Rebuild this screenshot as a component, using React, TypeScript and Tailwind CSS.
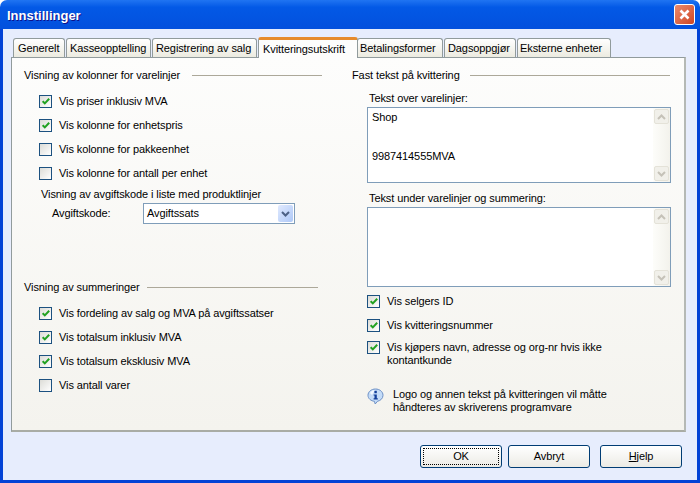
import React from "react";

const FONT = "[font-family:'Liberation_Sans',sans-serif]";

const TABS = [
  { label: "Generelt", box: "w-[52px] pl-[4px]" },
  { label: "Kasseopptelling", box: "w-[85px] pl-[3px]" },
  { label: "Registrering av salg", box: "w-[105px] pl-[3px]" },
  { label: "Kvitteringsutskrift", box: "w-[100px] pl-[4px]", active: true },
  { label: "Betalingsformer", box: "w-[86px] -ml-[2px] pl-[2px]" },
  { label: "Dagsoppgjør", box: "w-[72px] pl-[3px]" },
  { label: "Eksterne enheter", box: "w-[94px] pl-[2px]" },
];

function Check({ checked, label, className = "" }: { checked?: boolean; label: string; className?: string }) {
  return (
    <div className={`flex items-start gap-[7px] ${className}`}>
      <span className="w-[13px] h-[13px] shrink-0 border border-[#1c5180] bg-gradient-to-br from-[#dcdcd7] to-white flex items-center justify-center">
        {checked && (
          <svg width="8" height="7" viewBox="0 0 8 7">
            <path d="M0.7 3.2 L2.8 5.4 L7.2 0.8" fill="none" stroke="#21a121" strokeWidth="2" />
          </svg>
        )}
      </span>
      <span className="leading-[13px] text-black">{label}</span>
    </div>
  );
}

function GroupTitle({ title, line }: { title: string; line: string }) {
  return (
    <div className="flex items-center h-[13px]">
      <span className="whitespace-nowrap leading-[13px]">{title}</span>
      <span className={`h-px bg-[#aca899] ${line}`} />
    </div>
  );
}

function ScrollButton({ down }: { down?: boolean }) {
  return (
    <span className="w-[15px] h-[15px] rounded-[2px] bg-[#f1f0ea] border border-[#e4e2d8] flex items-center justify-center">
      <svg width="9" height="6" viewBox="0 0 9 6">
        <path d={down ? "M1 1 L4.5 4.5 L8 1" : "M1 5 L4.5 1.5 L8 5"} fill="none" stroke="#c5c2b8" strokeWidth="2" />
      </svg>
    </span>
  );
}

function TextBox({ height, children }: { height: string; children?: React.ReactNode }) {
  return (
    <div className={`flex w-[304px] ${height} border border-[#7f9db9] bg-white`}>
      <div className="flex-1 px-[4px] py-[3px] leading-[13px]">{children}</div>
      <div className="w-[17px] bg-gradient-to-r from-[#fdfdfa] to-[#f3f2ec] flex flex-col justify-between items-center py-px">
        <ScrollButton />
        <ScrollButton down />
      </div>
    </div>
  );
}

function WinButton({ label, focused }: { label: React.ReactNode; focused?: boolean }) {
  return (
    <button className="w-[82px] h-[23px] rounded-[3px] border border-[#003c74] bg-gradient-to-b from-white to-[#ecebe5] text-black flex items-center justify-center p-[2px]">
      <span className={`w-full h-full flex items-center justify-center ${focused ? "border border-dotted border-black" : ""}`}>{label}</span>
    </button>
  );
}

export default function App() {
  return (
    <div className={`w-[700px] h-[483px] bg-white overflow-hidden flex flex-col text-[11px] tracking-[-0.1px] text-black ${FONT}`}>
      {/* Title bar */}
      <div className="h-[29px] shrink-0 rounded-t-[7px] bg-gradient-to-b from-[#1f74f2] via-[#0359e6] via-[25%] to-[#0350dd] flex items-center justify-between pl-[7px] pr-[5px]">
        <span className="pt-[2px] text-white font-bold text-[13px] tracking-normal [text-shadow:1px_1px_#0f1089]">Innstillinger</span>
        <span className="w-[21px] h-[21px] rounded-[3px] border border-white bg-gradient-to-br from-[#ea8a6c] to-[#cf4420] flex items-center justify-center">
          <svg width="13" height="13" viewBox="0 0 13 13">
            <path d="M2.5 2.5 L10.5 10.5 M10.5 2.5 L2.5 10.5" stroke="white" strokeWidth="2.6" />
          </svg>
        </span>
      </div>

      {/* Window body */}
      <div className="flex-1 bg-[#e7edfd] border-x-[3px] border-b-[3px] border-[#0343d6] pl-[8px] pr-[11px] flex flex-col">
        {/* Tabs */}
        <div className="flex items-end h-[29px] pl-[2px] gap-px -mb-px">
          {TABS.map((tab) =>
            tab.active ? (
              <div key={tab.label} className={`${tab.box} h-[21px] relative z-10 bg-[#fdfdfc] border-x border-[#919b9c] border-t-[3px] border-t-[#e68b2c] rounded-t-[3px] flex items-center whitespace-nowrap`}>
                {tab.label}
              </div>
            ) : (
              <div key={tab.label} className={`${tab.box} h-[19px] mb-px bg-gradient-to-b from-white to-[#ecebe0] border border-b-0 border-[#919b9c] rounded-t-[3px] flex items-center whitespace-nowrap`}>
                {tab.label}
              </div>
            )
          )}
        </div>

        {/* Panel */}
        <div className="w-[675px] h-[375px] border border-[#919b9c] border-r-2 border-b-2 border-r-[#b5b9b5] border-b-[#a9aca5] bg-gradient-to-b from-[#fdfdfc] to-[#f4f3ee] flex">
          {/* Left column */}
          <div className="w-[340px] pl-[12px] pt-[11px]">
            <GroupTitle title="Visning av kolonner for varelinjer" line="ml-[12px] w-[130px]" />
            <div className="pl-[15px] pt-[13px] flex flex-col gap-[11px]">
              <Check checked label="Vis priser inklusiv MVA" />
              <Check checked label="Vis kolonne for enhetspris" />
              <Check label="Vis kolonne for pakkeenhet" />
              <Check label="Vis kolonne for antall per enhet" />
            </div>
            <div className="pl-[17px] pt-[8px] leading-[13px]">Visning av avgiftskode i liste med produktlinjer</div>
            <div className="flex items-center pl-[28px] pt-[2px]">
              <span className="w-[91px]">Avgiftskode:</span>
              <div className="w-[152px] h-[21px] border border-[#7f9db9] bg-white flex items-center justify-between pl-[3px] pr-px">
                <span>Avgiftssats</span>
                <span className="w-[15px] h-[17px] rounded-[2px] bg-gradient-to-br from-[#e1eafe] to-[#aec8f7] flex items-center justify-center">
                  <svg width="9" height="6" viewBox="0 0 9 6">
                    <path d="M1 1 L4.5 4.5 L8 1" fill="none" stroke="#4d6185" strokeWidth="2" />
                  </svg>
                </span>
              </div>
            </div>
            <div className="pt-[57px]">
              <GroupTitle title="Visning av summeringer" line="ml-[7px] w-[171px]" />
            </div>
            <div className="pl-[15px] pt-[13px] flex flex-col gap-[11px]">
              <Check checked label="Vis fordeling av salg og MVA på avgiftssatser" />
              <Check checked label="Vis totalsum inklusiv MVA" />
              <Check checked label="Vis totalsum eksklusiv MVA" />
              <Check label="Vis antall varer" />
            </div>
          </div>

          {/* Right column */}
          <div className="flex-1 pt-[11px]">
            <GroupTitle title="Fast tekst på kvittering" line="ml-[10px] w-[200px]" />
            <div className="pl-[15px]">
              <div className="pl-[2px] pt-[10px] pb-[2px] leading-[13px]">Tekst over varelinjer:</div>
              <TextBox height="h-[76px]">
                Shop
                <br />
                <br />
                <br />
                9987414555MVA
              </TextBox>
              <div className="pl-[2px] pt-[9px] pb-[2px] leading-[13px]">Tekst under varelinjer og summering:</div>
              <TextBox height="h-[80px]" />
              <div className="pt-[8px] flex flex-col gap-[11px]">
                <Check checked label="Vis selgers ID" />
                <Check checked label="Vis kvitteringsnummer" />
                <Check className="-mt-[2px] w-[290px]" checked label="Vis kjøpers navn, adresse og org-nr hvis ikke kontantkunde" />
              </div>
              <div className="flex items-start gap-[9px] pt-[21px]">
                <svg width="17" height="17" viewBox="0 0 17 17" className="shrink-0">
                  <path d="M8.5 1 C12.6 1 16 3.6 16 7.3 C16 10.6 13.2 12.8 10.6 13.2 L8.2 16 L7.4 13.3 C4 13 1 10.6 1 7.3 C1 3.6 4.4 1 8.5 1 Z" fill="#c4dcf8" stroke="#6d90c6" />
                  <path d="M3 5 C4 3 6 2 8 2 L5 7 Z" fill="#f2f8ff" />
                  <rect x="7.4" y="2.8" width="2.4" height="2.4" fill="#123f9a" />
                  <path d="M6.6 6.4 H9.8 V10.3 H10.8 V11.6 H6.6 V10.3 H7.5 V7.6 H6.6 Z" fill="#123f9a" />
                </svg>
                <span className="leading-[13px] w-[250px]">Logo og annen tekst på kvitteringen vil måtte håndteres av skriverens programvare</span>
              </div>
            </div>
          </div>
        </div>

        {/* Buttons */}
        <div className="flex justify-end pt-[13px] pr-[4px]">
          <WinButton focused label="OK" />
          <span className="w-[6px]" />
          <WinButton label="Avbryt" />
          <span className="w-[10px]" />
          <WinButton label={<><span className="underline">H</span>jelp</>} />
        </div>
      </div>
    </div>
  );
}
